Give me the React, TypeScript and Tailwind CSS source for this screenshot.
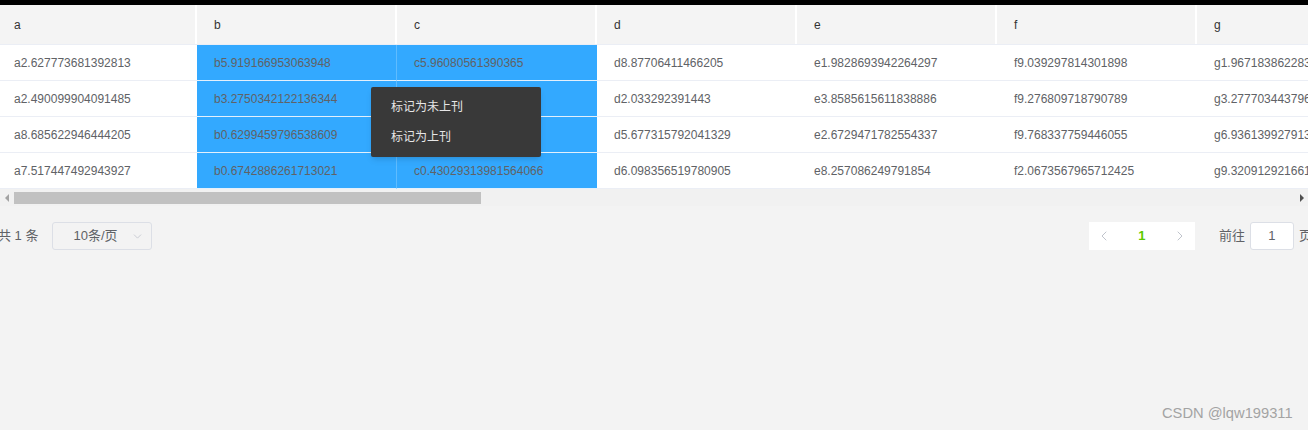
import { ChevronDown, ChevronLeft, ChevronRight } from "lucide-react";

const cols = ["a", "b", "c", "d", "e", "f", "g"];

const rows = [
  ["a2.627773681392813", "b5.919166953063948", "c5.96080561390365", "d8.87706411466205", "e1.9828693942264297", "f9.039297814301898", "g1.9671838622838"],
  ["a2.490099904091485", "b3.2750342122136344", "c9.6591339163917", "d2.033292391443", "e3.8585615611838886", "f9.276809718790789", "g3.2777034437966"],
  ["a8.685622946444205", "b0.6299459796538609", "c4.4153718283631", "d5.677315792041329", "e2.6729471782554337", "f9.768337759446055", "g6.9361399279134"],
  ["a7.517447492943927", "b0.6742886261713021", "c0.43029313981564066", "d6.098356519780905", "e8.257086249791854", "f2.0673567965712425", "g9.3209129216618"],
];

const font = "font-['Liberation_Sans','Noto_Sans_CJK_SC',sans-serif]";

const cellW = (i: number) => (i === 0 ? "w-[197px] pl-[14px]" : "w-[200px] pl-[17px]");

const App = () => {
  return (
    <div className={`relative h-[430px] w-[1308px] overflow-hidden bg-[#f3f3f3] ${font}`}>
      <div className="h-[5px] bg-black" />

      {/* table */}
      <div className="w-[1308px] overflow-hidden">
        <div className="flex h-[40px] border-b border-[#ebeef5] bg-[#f4f4f4]">
          {cols.map((c, i) => (
            <div
              key={c}
              className={`${cellW(i)} flex shrink-0 items-center border-r-2 border-white text-[12px] text-[#333]`}
            >
              {c}
            </div>
          ))}
        </div>
        {rows.map((r, ri) => (
          <div key={ri} className="flex h-[36px] bg-white">
            {r.map((v, i) => {
              const sel = i === 1 || i === 2;
              return (
                <div
                  key={i}
                  className={`${cellW(i)} flex shrink-0 items-center border-b text-[12px] text-[#606266] ${
                    sel
                      ? `bg-[#33a9ff] border-[#e3f0fc] ${i === 1 ? "border-r border-r-[#5fbcff]" : ""}`
                      : "border-[#ebeef5]"
                  }`}
                >
                  {v}
                </div>
              );
            })}
          </div>
        ))}

        {/* horizontal scrollbar */}
        <div className="flex h-[17px] items-center bg-[#f1f1f1]">
          <div className="flex w-[14px] justify-center">
            <div className="h-0 w-0 border-y-[4px] border-r-[4px] border-y-transparent border-r-[#a3a3a3]" />
          </div>
          <div className="h-[12px] w-[467px] bg-[#c1c1c1]" />
          <div className="flex-1" />
          <div className="flex w-[12px] justify-center">
            <div className="h-0 w-0 border-y-[4px] border-l-[4px] border-y-transparent border-l-[#505050]" />
          </div>
        </div>
      </div>

      {/* pagination */}
      <div className="mt-4 -mr-[4px] flex h-[28px] items-center text-[13px] text-[#606266]">
        <span className="-ml-[2px]">共 1 条</span>
        <div className="ml-[14px] flex h-[28px] w-[100px] items-center rounded-[3px] border border-[#dcdfe6] pl-[20px] pr-[7px]">
          <span className="flex-1">10条/页</span>
          <ChevronDown size={13} strokeWidth={1.5} className="text-[#c0c4cc]" />
        </div>
        <div className="flex-1" />
        <div className="flex h-[28px] items-center bg-white">
          <div className="flex w-[30px] justify-center text-[#c0c4cc]">
            <ChevronLeft size={16} strokeWidth={1.5} />
          </div>
          <div className="flex w-[46px] justify-center font-bold text-[#5cc900]">1</div>
          <div className="flex w-[30px] justify-center text-[#c0c4cc]">
            <ChevronRight size={16} strokeWidth={1.5} />
          </div>
        </div>
        <span className="ml-[24px]">前往</span>
        <div className="ml-[5px] flex h-[28px] w-[44px] items-center justify-center rounded-[3px] border border-[#dcdfe6] bg-white">
          1
        </div>
        <span className="ml-[5px] shrink-0">页</span>
      </div>

      {/* context menu */}
      <div className="absolute left-[371px] top-[87px] w-[170px] rounded-[2px] bg-[#393939] py-[5px] text-[12px] text-[#e6e6e6] shadow-md">
        <div className="flex h-[30px] items-center pl-[20px]">标记为未上刊</div>
        <div className="flex h-[30px] items-center pl-[20px]">标记为上刊</div>
      </div>

      {/* watermark */}
      <div className="absolute left-[1162px] top-[402px] text-[14.7px] text-[#a3a3a3]">CSDN @lqw199311</div>
    </div>
  );
};

export default App;
